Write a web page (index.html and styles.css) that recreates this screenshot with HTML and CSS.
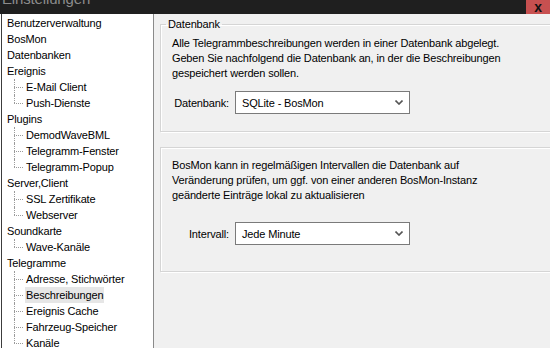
FILE: index.html
```html
<!DOCTYPE html>
<html lang="de">

<head>
  <meta charset="UTF-8">
  <title>Einstellungen</title>
  <link rel="stylesheet" href="styles.css">
</head>

<body>
  <div class="titlebar">
    <span class="title">Einstellungen</span>
    <span class="close">x</span>
  </div>

  <div class="main">
    <ul class="tree">
      <li><span class="label">Benutzerverwaltung</span></li>
      <li><span class="label">BosMon</span></li>
      <li><span class="label">Datenbanken</span></li>
      <li><span class="label">Ereignis</span>
        <ul class="children">
          <li><span class="label">E-Mail Client</span></li>
          <li><span class="label">Push-Dienste</span></li>
        </ul>
      </li>
      <li><span class="label">Plugins</span>
        <ul class="children">
          <li><span class="label">DemodWaveBML</span></li>
          <li><span class="label">Telegramm-Fenster</span></li>
          <li><span class="label">Telegramm-Popup</span></li>
        </ul>
      </li>
      <li><span class="label">Server,Client</span>
        <ul class="children">
          <li><span class="label">SSL Zertifikate</span></li>
          <li><span class="label">Webserver</span></li>
        </ul>
      </li>
      <li><span class="label">Soundkarte</span>
        <ul class="children">
          <li><span class="label">Wave-Kanäle</span></li>
        </ul>
      </li>
      <li><span class="label">Telegramme</span>
        <ul class="children">
          <li><span class="label">Adresse, Stichwörter</span></li>
          <li><span class="label selected">Beschreibungen</span></li>
          <li><span class="label">Ereignis Cache</span></li>
          <li><span class="label">Fahrzeug-Speicher</span></li>
          <li><span class="label">Kanäle</span></li>
        </ul>
      </li>
    </ul>

    <div class="panel">
      <fieldset class="group">
        <legend>Datenbank</legend>
        <p>Alle Telegrammbeschreibungen werden in einer Datenbank abgelegt.<br>
          Geben Sie nachfolgend die Datenbank an, in der die Beschreibungen<br>
          gespeichert werden sollen.</p>
        <div class="field first">
          <label>Datenbank:</label>
          <div class="select">
            <span>SQLite - BosMon</span>
            <svg width="8" height="5" viewBox="0 0 8 5"><path d="M0.5 0.5 L4 4 L7.5 0.5" fill="none" stroke="#555" stroke-width="1.6"/></svg>
          </div>
        </div>
      </fieldset>

      <fieldset class="group second">
        <p>BosMon kann in regelmäßigen Intervallen die Datenbank auf<br>
          Veränderung prüfen, um ggf. von einer anderen BosMon-Instanz<br>
          geänderte Einträge lokal zu aktualisieren</p>
        <div class="field">
          <label>Intervall:</label>
          <div class="select">
            <span>Jede Minute</span>
            <svg width="8" height="5" viewBox="0 0 8 5"><path d="M0.5 0.5 L4 4 L7.5 0.5" fill="none" stroke="#555" stroke-width="1.6"/></svg>
          </div>
        </div>
      </fieldset>
    </div>
  </div>
</body>

</html>
```

FILE: styles.css
```css
body {
  margin: 0;
  padding: 0;
  width: 550px;
  height: 348px;
  overflow: hidden;
  background: #fff;
  font-family: "Liberation Sans", Arial, sans-serif;
  font-size: 11px;
  letter-spacing: -0.15px;
  color: #000;
}

.titlebar {
  height: 14px;
  background: #1f1f1f;
  display: flex;
  justify-content: space-between;
  overflow: hidden;
}

.title {
  color: #8c8c8c;
  font-size: 15px;
  line-height: 15px;
  margin: -9px 0 0 2px;
}

.close {
  width: 24px;
  background: #c75050;
  color: #111;
  font-weight: bold;
  font-size: 14px;
  line-height: 14px;
  text-align: center;
  margin-top: -5px;
  padding-top: 5px;
}

.main {
  display: flex;
  height: 334px;
}

.tree {
  list-style: none;
  margin: 0 0 0 1px;
  padding: 1px 0 0 0;
  width: 151px;
  border-left: 1px solid #3c3c3c;
  border-right: 1px solid #8a8a8a;
  background: #fff;
  overflow: hidden;
}

.tree li {
  line-height: 16px;
}

.tree .label {
  display: inline-block;
  padding: 0 1px;
  margin-left: 4px;
  white-space: nowrap;
}

.tree .label.selected {
  background: #e6e6e6;
}

.children {
  list-style: none;
  margin: 0;
  padding: 0 0 0 19px;
}

.children li {
  position: relative;
}

.children li::before {
  content: "";
  position: absolute;
  left: -7px;
  top: 8px;
  width: 9px;
  border-top: 1px dotted #9a9a9a;
}

.children li::after {
  content: "";
  position: absolute;
  left: -7px;
  top: 0;
  height: 16px;
  border-left: 1px dotted #9a9a9a;
}

.children li:last-child::after {
  height: 8px;
}

.panel {
  flex: 1;
  background: #f0f0f0;
  overflow: hidden;
  padding: 3px 0 0 6px;
}

.group {
  width: 420px;
  margin: 0;
  padding: 0 0 17px 11px;
  border: 1px solid #d5d5d5;
  box-shadow: 1px 1px 0 #fff, inset 1px 1px 0 #fff;
}

.group legend {
  margin-left: -6px;
  padding: 0 2px;
  line-height: 15px;
}

.group p {
  margin: 4px 0 0 0;
  line-height: 15px;
}

.group.second {
  margin-top: 15px;
  padding-top: 10px;
  padding-bottom: 26px;
}

.group.second p {
  margin-top: 0;
}

.field {
  display: flex;
  align-items: center;
  gap: 6px;
  margin-top: 19px;
}

.field.first {
  margin-top: 10px;
}

.field label {
  width: 57px;
  text-align: right;
}

.select {
  width: 160px;
  height: 21px;
  background: #fff;
  border: 1px solid #7a7a7a;
  display: flex;
  align-items: center;
  justify-content: space-between;
  padding: 0 7px 0 6px;
  box-sizing: content-box;
}

.select svg {
  margin-right: -1px;
}
```
